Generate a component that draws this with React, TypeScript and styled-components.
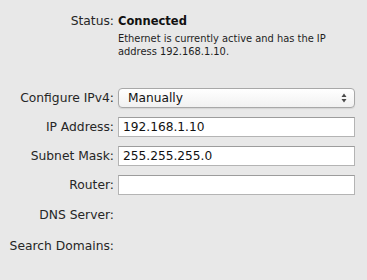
import React from "react";
import styled, { createGlobalStyle } from "styled-components";

const Global = createGlobalStyle`
  html, body { margin: 0; padding: 0; background: #e8e8e8; }
  body { font-family: "DejaVu Sans", "Liberation Sans", sans-serif; color: #1e1e1e; }
`;

const Panel = styled.div`
  width: 367px;
  height: 280px;
  box-sizing: border-box;
  padding-top: 11px;
  background: #e8e8e8;
  display: grid;
  grid-template-columns: 114px 237px;
  column-gap: 4px;
  row-gap: 9px;
  align-content: start;
`;

const Label = styled.div<{ $top?: boolean; $tall?: boolean }>`
  font-size: 12.3px;
  line-height: ${(p) => (p.$tall ? "22px" : "20px")};
  height: ${(p) => (p.$tall ? "22px" : "20px")};
  text-align: right;
  color: #262626;
  white-space: nowrap;
  align-self: ${(p) => (p.$top ? "start" : "center")};
`;

const StatusBlock = styled.div`
  margin-bottom: 21px;
`;

const StatusValue = styled.div`
  font-size: 11.5px;
  font-weight: bold;
  line-height: 20px;
  color: #111;
`;

const Description = styled.div`
  font-size: 9.9px;
  line-height: 13px;
  color: #1e1e1e;
  margin-top: 1px;
  width: 236px;
`;

const Field = styled.div`
  height: 20px;
  box-sizing: border-box;
  background: #fff;
  border: 1px solid #b4b4b4;
  border-top-color: #9c9c9c;
  font-size: 12.2px;
  line-height: 18px;
  padding-left: 4px;
  color: #111;
`;

const Select = styled.div`
  height: 20px;
  box-sizing: border-box;
  border: 1px solid #a8a8a8;
  border-radius: 4px;
  background: linear-gradient(#ffffff, #f1f1f1);
  box-shadow: 0 1px 1px rgba(0, 0, 0, 0.08);
  display: flex;
  align-items: center;
  justify-content: space-between;
  padding: 0 7px 0 9px;
  font-size: 12.2px;
  color: #111;
`;

const Arrows = styled.svg`
  width: 6px;
  height: 10px;
`;

const Empty = styled.div<{ $tall?: boolean }>`
  height: ${(p) => (p.$tall ? "22px" : "20px")};
`;

export default function App() {
  return (
    <>
      <Global />
      <Panel>
        <Label $top>Status:</Label>
        <StatusBlock>
          <StatusValue>Connected</StatusValue>
          <Description>
            Ethernet is currently active and has the IP address 192.168.1.10.
          </Description>
        </StatusBlock>

        <Label>Configure IPv4:</Label>
        <Select>
          <span>Manually</span>
          <Arrows viewBox="0 0 6 10">
            <path d="M3 0.5 L5.5 4 L0.5 4 Z" fill="#4a4a4a" />
            <path d="M3 9.5 L5.5 6 L0.5 6 Z" fill="#4a4a4a" />
          </Arrows>
        </Select>

        <Label>IP Address:</Label>
        <Field>192.168.1.10</Field>

        <Label>Subnet Mask:</Label>
        <Field>255.255.255.0</Field>

        <Label>Router:</Label>
        <Field />

        <Label $tall>DNS Server:</Label>
        <Empty $tall />

        <Label $tall>Search Domains:</Label>
        <Empty $tall />
      </Panel>
    </>
  );
}
